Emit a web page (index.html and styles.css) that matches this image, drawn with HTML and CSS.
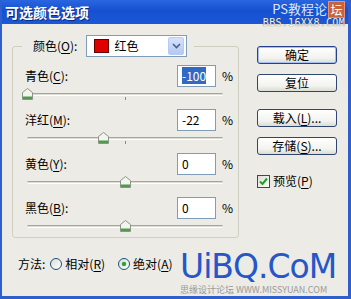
FILE: index.html
```html
<!DOCTYPE html>
<html lang="zh-CN">
<head>
<meta charset="UTF-8">
<title>可选颜色选项</title>
<link rel="stylesheet" href="styles.css">
</head>
<body>

<div class="window">
  <div class="titlebar">
    <span class="title">可选颜色选项</span>
    <div class="wm-top">
      <div class="wm-line1">PS教程论<span class="wm-badge">坛</span></div>
      <div class="wm-line2">BBS.16XX8.COM</div>
    </div>
  </div>

  <div class="main">
    <fieldset class="group">
      <legend>
        <span class="lbl">颜色(<u>O</u>):</span>
        <span class="select">
          <span class="swatch"></span>
          <span class="select-text">红色</span>
          <span class="select-btn">
            <svg width="9" height="6" viewBox="0 0 9 6"><path d="M1 1 L4.5 4.5 L8 1" fill="none" stroke="#4a5f8a" stroke-width="1.6"/></svg>
          </span>
        </span>
      </legend>

      <div class="row">
        <div class="row-top">
          <span class="lbl">青色(<u>C</u>):</span>
          <span class="field"><span class="sel">-100</span></span>
          <span class="pct">%</span>
        </div>
        <div class="slider"><span class="track"></span><span class="tick"></span>
          <span class="thumb" style="left: 0px"><svg width="11" height="12" viewBox="0 0 11 12"><path d="M5.5 0.5 L10.5 4.5 V11.5 H0.5 V4.5 Z" fill="#f2f5ee" stroke="#8c9488"/><rect x="1" y="8.5" width="9" height="2.5" fill="#4f9a4f"/></svg></span>
        </div>
      </div>

      <div class="row">
        <div class="row-top">
          <span class="lbl">洋红(<u>M</u>):</span>
          <span class="field">-22</span>
          <span class="pct">%</span>
        </div>
        <div class="slider"><span class="track"></span><span class="tick"></span>
          <span class="thumb" style="left: 76px"><svg width="11" height="12" viewBox="0 0 11 12"><path d="M5.5 0.5 L10.5 4.5 V11.5 H0.5 V4.5 Z" fill="#f2f5ee" stroke="#8c9488"/><rect x="1" y="8.5" width="9" height="2.5" fill="#4f9a4f"/></svg></span>
        </div>
      </div>

      <div class="row">
        <div class="row-top">
          <span class="lbl">黄色(<u>Y</u>):</span>
          <span class="field">0</span>
          <span class="pct">%</span>
        </div>
        <div class="slider"><span class="track"></span><span class="tick"></span>
          <span class="thumb" style="left: 98px"><svg width="11" height="12" viewBox="0 0 11 12"><path d="M5.5 0.5 L10.5 4.5 V11.5 H0.5 V4.5 Z" fill="#f2f5ee" stroke="#8c9488"/><rect x="1" y="8.5" width="9" height="2.5" fill="#4f9a4f"/></svg></span>
        </div>
      </div>

      <div class="row">
        <div class="row-top">
          <span class="lbl">黑色(<u>B</u>):</span>
          <span class="field">0</span>
          <span class="pct">%</span>
        </div>
        <div class="slider"><span class="track"></span><span class="tick"></span>
          <span class="thumb" style="left: 98px"><svg width="11" height="12" viewBox="0 0 11 12"><path d="M5.5 0.5 L10.5 4.5 V11.5 H0.5 V4.5 Z" fill="#f2f5ee" stroke="#8c9488"/><rect x="1" y="8.5" width="9" height="2.5" fill="#4f9a4f"/></svg></span>
        </div>
      </div>
    </fieldset>

    <div class="buttons">
      <button class="btn default">确定</button>
      <button class="btn">复位</button>
      <button class="btn gap">载入(<u>L</u>)...</button>
      <button class="btn">存储(<u>S</u>)...</button>
      <label class="check">
        <span class="box"><svg width="9" height="9" viewBox="0 0 9 9"><path d="M1 4.5 L3.5 7 L8 1.5" fill="none" stroke="#23a023" stroke-width="2"/></svg></span>
        预览(<u>P</u>)
      </label>
    </div>
  </div>

  <div class="method">
    <span class="lbl">方法:</span>
    <span class="radio"><span class="dot"></span>相对(<u>R</u>)</span>
    <span class="radio on"><span class="dot"></span>绝对(<u>A</u>)</span>
  </div>

  <div class="wm-bottom">
    <div class="wm-big">UiBQ.CoM</div>
    <div class="wm-small">思缘设计论坛 WWW.MISSYUAN.COM</div>
  </div>
</div>

</body>
</html>
```

FILE: styles.css
```css
* { margin: 0; padding: 0; box-sizing: border-box; }
body { font-family: "Noto Sans CJK SC", "DejaVu Sans", sans-serif; font-size: 12px; line-height: 16px; color: #000; background: #fff; }
u { text-decoration: underline; text-underline-offset: 2px; }

.window {
  position: relative;
  width: 351px;
  height: 299px;
  background: #ecebe5;
  border: solid #2f5fcc;
  border-width: 0 3px 3px 2px;
  overflow: hidden;
}

/* title bar */
.titlebar {
  position: relative;
  height: 24px;
  margin: 0 -3px 0 -2px;
  background: linear-gradient(#2a66e0, #1550d0 45%, #1a58d8);
  display: flex;
  align-items: center;
  padding-left: 5px;
}
.title { color: #fff; font-weight: bold; font-size: 14px; text-shadow: 1px 1px 0 #0a2a80; }

.wm-top { position: absolute; right: 6px; top: 0; text-align: right; }
.wm-line1 { height: 18px; font-size: 13px; line-height: 18px; display: flex; align-items: center; justify-content: flex-end; color: #dfe6f2; }
.wm-badge { display: inline-block; width: 17px; height: 17px; margin-left: 1px; background: #c8643c; border: 1px solid #e89070; color: #fff; font-size: 12px; line-height: 15px; text-align: center; }
.wm-line2 { height: 9px; font-family: "DejaVu Sans Mono", monospace; font-size: 10px; line-height: 9px; color: #f4f4f4; text-shadow: 0 0 1px #333; letter-spacing: 0.3px; }

/* main area */
.main { display: flex; padding-left: 10px; }

.group {
  width: 227px;
  margin-top: 11px;
  border: 1px solid #d0d0bf;
  border-radius: 3px;
  padding: 8px 0 0 0;
}
.group legend {
  margin-left: 9px;
  padding: 0 7px 0 11px;
  display: flex;
  align-items: center;
}
.group legend .lbl { margin-right: 9px; }

.select {
  width: 101px;
  height: 22px;
  background: #fff;
  border: 1px solid #7f9db9;
  display: flex;
  align-items: center;
  padding: 2px;
}
.swatch { width: 15px; height: 14px; margin-left: 5px; background: #e00000; border: 1px solid #600; }
.select-text { margin-left: 5px; flex: 1; }
.select-btn {
  width: 16px;
  height: 18px;
  background: linear-gradient(#d6e2fd, #b4c8f6);
  border: 1px solid #b8cbf3;
  border-radius: 2px;
  display: flex;
  align-items: center;
  justify-content: center;
}

.row { padding-left: 12px; margin-bottom: 4px; }
.row:last-child { margin-bottom: 0; }
.row-top { display: flex; align-items: center; height: 22px; }
.row-top .lbl { flex: 1; }
.field {
  width: 39px;
  height: 22px;
  background: #fff;
  border: 1px solid #7f9db9;
  padding: 2px 4px;
  line-height: 16px;
}
.sel { background: #316ac5; color: #fff; }
.pct { width: 22px; padding-left: 6px; }

.slider { position: relative; height: 18px; margin-left: 2px; width: 196px; }
.track {
  position: absolute;
  left: 0;
  right: 0;
  top: 6px;
  height: 3px;
  border-radius: 2px;
  border-top: 1px solid #a6a69c;
  border-bottom: 1px solid #fff;
  background: #dcdcd4;
}
.tick { position: absolute; left: 98px; top: 10px; width: 1px; height: 3px; background: #8a8a80; }
.thumb { position: absolute; top: 1px; margin-left: -5px; line-height: 0; }

/* buttons */
.buttons { margin-left: 18px; margin-top: 22px; display: flex; flex-direction: column; width: 80px; }
.btn {
  height: 18px;
  margin-bottom: 10px;
  font-family: inherit;
  font-size: 12px;
  line-height: 14px;
  border: 1px solid #2e4670;
  border-radius: 3px;
  background: linear-gradient(#ffffff, #f2f2ee 70%, #dcdcd4);
  color: #000;
}
.btn.default { border-color: #27408a; box-shadow: inset 0 0 0 1px #a8c0f0; }
.btn.gap { margin-top: 7px; }
.check { display: flex; align-items: center; margin-top: 8px; }
.box {
  width: 13px;
  height: 13px;
  margin-right: 3px;
  border: 1px solid #1c5180;
  background: linear-gradient(135deg, #dcdcd6, #fff);
  display: flex;
  align-items: center;
  justify-content: center;
}

/* method */
.method { display: flex; align-items: center; margin-top: 18px; padding-left: 16px; }
.method .lbl { margin-right: 5px; }
.radio { display: flex; align-items: center; margin-right: 13px; }
.dot {
  width: 12px;
  height: 12px;
  border-radius: 50%;
  border: 1px solid #1c5180;
  background: linear-gradient(135deg, #dcdcd6, #fff);
  margin-right: 3px;
  display: flex;
  align-items: center;
  justify-content: center;
}
.radio.on .dot::after { content: ""; width: 4px; height: 4px; border-radius: 50%; background: #2da02d; box-shadow: 0 0 1px #2da02d; }

/* watermark */
.wm-bottom { position: absolute; left: 178px; top: 250px; width: 166px; }
.wm-big { font-family: "DejaVu Sans", sans-serif; font-size: 33px; line-height: 34px; color: #2557c8; letter-spacing: -1px; white-space: nowrap; }
.wm-small { font-size: 9px; line-height: 11px; color: #9a9a98; white-space: nowrap; }
```
